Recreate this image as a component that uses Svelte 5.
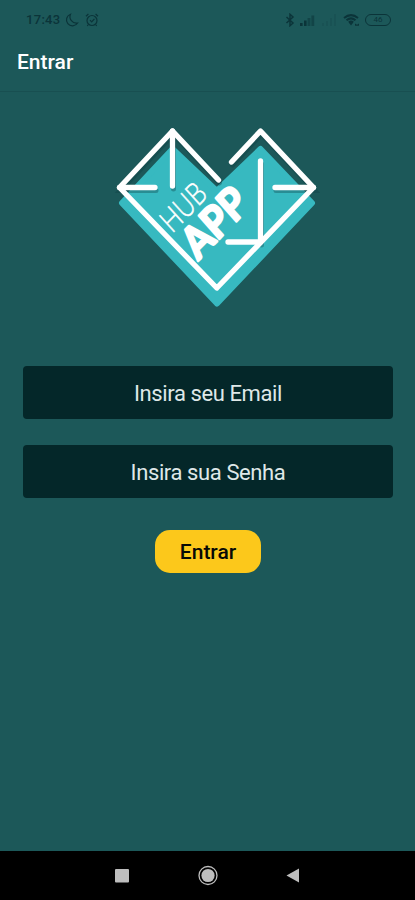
<script>
  const clock = '17:43';
  const battery = '46';

  const fields = [
    { id: 'email', type: 'email', label: 'Insira seu Email' },
    { id: 'senha', type: 'password', label: 'Insira sua Senha' }
  ];

  let values = $state({ email: '', senha: '' });
</script>

<div class="screen">
  <div class="status">
    <div class="group">
      <span class="clock">{clock}</span>
      <svg class="moon" width="15" height="14" viewBox="0 0 15 14">
        <path d="M5.5 1.2A6 6 0 1 0 12.6 10 6.4 6.4 0 0 1 5.5 1.2z" />
      </svg>
      <svg class="alarm" width="14" height="14" viewBox="0 0 14 14">
        <circle cx="7" cy="7.5" r="5" />
        <path d="M1 3.2 3.4 1M13 3.2 10.6 1M5 7.2l1.7 1.7 2.7-3M3.4 11.5 2.3 13M10.6 11.5l1.1 1.5" />
      </svg>
    </div>
    <div class="group">
      <svg width="10" height="14" viewBox="0 0 10 14">
        <path class="bold" d="M1.5 4 8 10 5 12.7V1.3L8 4 1.5 10" />
      </svg>
      <svg class="bars" width="15" height="12" viewBox="0 0 15 12">
        <path d="M0 9h2.6v3H0zM4 6.5h2.6V12H4z" />
        <path class="half" d="M7.6 4h2.8v8H7.6zM11.4 1.5h2.8V12h-2.8z" />
      </svg>
      <svg class="bars faint" width="15" height="12" viewBox="0 0 15 12">
        <path d="M0 9h2v3H0zM4 7h2v5H4zM8 4h2v8H8zM12 0h2v12h-2z" />
      </svg>
      <svg class="wifi" width="17" height="14" viewBox="0 0 17 14">
        <path d="M1 5Q8 -.8 15 5M3.5 7.3Q8 3.4 12.5 7.3M5.8 9.5Q8 7.8 10.2 9.5" />
        <path class="solid" d="M6 9.8h4L8 12.4zM12 12.8v-2.3l2 1.2 2-1.2v2.3z" />
      </svg>
      <span class="battery">{battery}</span>
    </div>
  </div>

  <header>
    <h1>Entrar</h1>
  </header>

  <main>
    <svg class="logo" width="208" height="188" viewBox="112 124 208 188" role="img" aria-label="Hub App">
      <path class="heart" d="M172.5 149 216.8 191 260.5 149 312 203 217 303.5 122 203z" />
      <g class="shade" transform="translate(1 3)">
        <path d="M218.5 180 172.5 131 119.5 187.5H155M172.5 131V186" />
        <path d="M231.5 162 260.5 131 313.5 187.5H275M260.5 161V242" />
      </g>
      <g class="lines">
        <path d="M218.5 180 172.5 131 119.5 187.5 216.8 288 313.5 187.5 260.5 131 231.5 162" />
        <path d="M172.5 131V186M119.5 187.5H155M313.5 187.5H275M260.5 161V242H228" />
      </g>
      <text class="hub" transform="matrix(.695 -.719 .67 .74 172 234)" textLength="53" lengthAdjust="spacingAndGlyphs">HUB</text>
      <text class="app" transform="matrix(.695 -.719 .66 .75 198 261)" textLength="76" lengthAdjust="spacingAndGlyphs">APP</text>
    </svg>

    <form onsubmit={(e) => e.preventDefault()}>
      {#each fields as { id, type, label } (id)}
        <input {type} name={id} placeholder={label} aria-label={label} bind:value={values[id]} />
      {/each}
      <button type="submit">Entrar</button>
    </form>
  </main>

  <nav>
    <svg width="240" height="22" viewBox="0 0 240 22">
      <rect x="25" y="4" width="14" height="13.5" rx="1" />
      <circle cx="118" cy="10.5" r="6.6" />
      <circle class="ring" cx="118" cy="10.5" r="9" />
      <path d="M196.5 10.5 209 3.5v14z" />
    </svg>
  </nav>
</div>

<style>
  :global(body) {
    margin: 0;
    background: #1c5859;
  }

  .screen {
    display: flex;
    flex-direction: column;
    height: 900px;
    background: #1c5859;
    font-family: Roboto, sans-serif;
  }

  .status {
    display: flex;
    justify-content: space-between;
    align-items: center;
    box-sizing: border-box;
    height: 39px;
    padding: 0 24px 0 26px;
    color: #0b3439;
  }

  .group {
    display: flex;
    align-items: center;
  }

  .clock {
    font-size: 13px;
    font-weight: 500;
    letter-spacing: 0.3px;
    width: 39px;
  }

  .status svg {
    fill: none;
    stroke: #0b3439;
    stroke-width: 1.2;
  }

  .status .bold {
    stroke-width: 1.5;
  }

  .alarm {
    margin-left: 5px;
  }

  .status .bars {
    margin-left: 5px;
    fill: #0b3439;
    stroke: none;
  }

  .half {
    opacity: 0.55;
  }

  .status .faint {
    margin-left: 7px;
    opacity: 0.15;
  }

  .status .wifi {
    margin-left: 6px;
    stroke-width: 2;
  }

  .solid {
    fill: #0b3439;
    stroke: none;
  }

  .battery {
    box-sizing: border-box;
    width: 26px;
    height: 12px;
    margin-left: 5px;
    border: 1.5px solid #0b3439;
    border-radius: 6px;
    font-size: 8px;
    line-height: 10px;
    text-align: center;
  }

  header {
    display: flex;
    align-items: center;
    box-sizing: border-box;
    height: 53px;
    padding: 0 17px 6px;
    border-bottom: 1px solid #184f51;
  }

  h1 {
    margin: 0;
    color: #fff;
    font-size: 21px;
    font-weight: 500;
  }

  main {
    flex: 1;
    display: flex;
    flex-direction: column;
    align-items: center;
    padding: 32px 22px 0 23px;
  }

  .logo {
    flex: none;
    margin-left: 15px;
  }

  .heart {
    fill: #37b9c0;
    stroke: #37b9c0;
    stroke-width: 6;
    stroke-linejoin: round;
  }

  .shade {
    fill: none;
    stroke: #0d3d42;
    stroke-width: 5;
    stroke-linecap: round;
    opacity: 0.35;
  }

  .lines {
    fill: none;
    stroke: #fff;
    stroke-width: 5.3;
    stroke-linecap: round;
    stroke-linejoin: round;
  }

  .hub,
  .app {
    fill: #fff;
    font-family: Lato, sans-serif;
  }

  .hub {
    font-size: 31px;
    font-weight: 300;
    stroke: #fff;
    stroke-width: 0.5;
  }

  .app {
    font-size: 43px;
    font-weight: 700;
    stroke: #fff;
    stroke-width: 2.5;
    stroke-linejoin: round;
  }

  form {
    display: flex;
    flex-direction: column;
    align-items: center;
    align-self: stretch;
    margin-top: 54px;
  }

  input {
    box-sizing: border-box;
    width: 100%;
    height: 53px;
    margin: 0 0 26px;
    padding: 2px 0 0;
    border: 0;
    border-radius: 4px;
    background: #042729;
    color: #dfe8e8;
    font: 22px Roboto, sans-serif;
    letter-spacing: -0.4px;
    text-align: center;
  }

  input::placeholder {
    color: #dfe8e8;
    opacity: 1;
  }

  button {
    width: 106px;
    height: 43px;
    margin-top: 6px;
    padding: 1px 0 0;
    border: 0;
    border-radius: 15px;
    background: #fcc81b;
    color: #080a06;
    font: 500 21px Roboto, sans-serif;
  }

  nav {
    display: flex;
    justify-content: center;
    align-items: center;
    height: 49px;
    background: #000;
  }

  nav svg {
    margin-left: 5px;
    fill: #bebebe;
  }

  .ring {
    fill: none;
    stroke: #bebebe;
    stroke-width: 1.3;
  }
</style>
